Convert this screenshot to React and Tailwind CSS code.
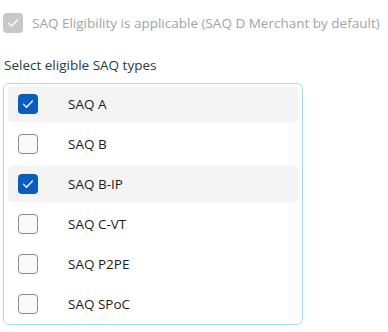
const SAQ_TYPES = [
  { label: "SAQ A", checked: true },
  { label: "SAQ B", checked: false },
  { label: "SAQ B-IP", checked: true },
  { label: "SAQ C-VT", checked: false },
  { label: "SAQ P2PE", checked: false },
  { label: "SAQ SPoC", checked: false },
];

function Check({ className }) {
  return (
    <svg viewBox="0 0 20 20" className={className} fill="none" stroke="currentColor" strokeWidth="1.3">
      <path d="M5.5 10.2l3 3 6-6.2" strokeLinecap="round" strokeLinejoin="round" />
    </svg>
  );
}

function Box({ checked, disabled }) {
  if (disabled) {
    return (
      <span className="flex h-5 w-5 shrink-0 items-center justify-center rounded-[4px] bg-[#c8c8c8] text-white">
        <Check className="h-5 w-5" />
      </span>
    );
  }
  if (checked) {
    return (
      <span className="flex h-5 w-5 shrink-0 items-center justify-center rounded-[4px] bg-[#0a5cbe] text-white">
        <Check className="h-5 w-5" />
      </span>
    );
  }
  return <span className="h-5 w-5 shrink-0 rounded-[4px] border border-[#8a8a8a] bg-[#f9f9f9]" />;
}

export default function App() {
  return (
    <div className="bg-white pl-[3px] pt-[13px] font-['Open_Sans','Noto_Sans',sans-serif] text-[13.5px]">
      <div className="flex h-5 items-center gap-[9px]">
        <Box disabled />
        <span className="text-[#a3a3a3]">SAQ Eligibility is applicable (SAQ D Merchant by default)</span>
      </div>

      <p className="mt-[22px] pl-px leading-5 text-[#25403e]">Select eligible SAQ types</p>

      <div className="mt-[8px] flex w-[300px] flex-col gap-1 rounded-[6px] border border-[#a9dbe8] px-1 py-[2px]">
        {SAQ_TYPES.map((t) => (
          <div
            key={t.label}
            className={`flex h-9 items-center rounded-[4px] pl-[10px] ${t.checked ? "bg-[#f4f4f4]" : ""}`}
          >
            <Box checked={t.checked} />
            <span className="ml-[30px] text-[#1b1b1b]">{t.label}</span>
          </div>
        ))}
      </div>
    </div>
  );
}
